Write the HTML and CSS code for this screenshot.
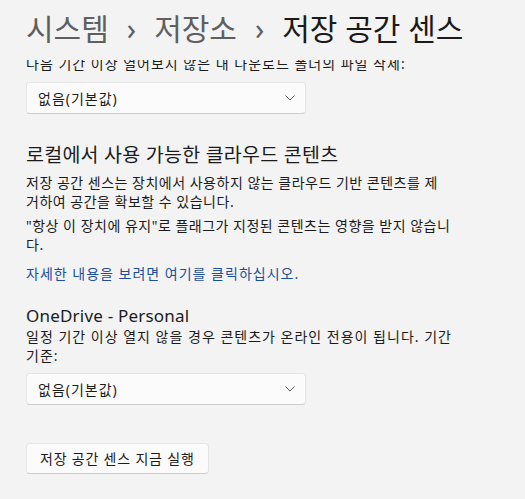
FILE: index.html
```html
<!DOCTYPE html>
<html lang="ko">
<head>
<meta charset="UTF-8">
<meta name="viewport" content="width=device-width, initial-scale=1.0">
<title>저장 공간 센스</title>
<link rel="stylesheet" href="styles.css">
</head>
<body>

<div class="window">
  <header class="page-header">
    <h1 class="breadcrumb">
      <span>시스템</span><span class="sep">›</span><span>저장소</span><span class="sep">›</span><span class="current">저장 공간 센스</span>
    </h1>
  </header>

  <main class="scroll">
    <div class="content">
      <section class="downloads">
        <p class="label">다음 기간 이상 열어보지 않은 내 다운로드 폴더의 파일 삭제:</p>
        <button class="combo" type="button">
          <span>없음(기본값)</span>
          <svg class="chevron" width="10" height="6" viewBox="0 0 10 6"><polyline points="0.5,0.5 5,5 9.5,0.5" fill="none" stroke="#616161" stroke-width="1"/></svg>
        </button>
      </section>

      <section class="cloud">
        <h2 class="section-title">로컬에서 사용 가능한 클라우드 콘텐츠</h2>
        <p class="desc">저장 공간 센스는 장치에서 사용하지 않는 클라우드 기반 콘텐츠를 제<br>거하여 공간을 확보할 수 있습니다.</p>
        <p class="desc">"항상 이 장치에 유지"로 플래그가 지정된 콘텐츠는 영향을 받지 않습니<br>다.</p>
        <p class="desc more"><a href="#">자세한 내용을 보려면 여기를 클릭하십시오.</a></p>
      </section>

      <section class="onedrive">
        <h3 class="account">OneDrive - Personal</h3>
        <p class="label">일정 기간 이상 열지 않을 경우 콘텐츠가 온라인 전용이 됩니다. 기간<br>기준:</p>
        <button class="combo" type="button">
          <span>없음(기본값)</span>
          <svg class="chevron" width="10" height="6" viewBox="0 0 10 6"><polyline points="0.5,0.5 5,5 9.5,0.5" fill="none" stroke="#616161" stroke-width="1"/></svg>
        </button>
      </section>

      <button class="run" type="button">저장 공간 센스 지금 실행</button>
    </div>
  </main>
</div>

</body>
</html>
```

FILE: styles.css
```css
* {
  box-sizing: border-box;
}
body {
  margin: 0;
  background: #f3f3f3;
  color: #1b1b1b;
  font-family: "Noto Sans", "Noto Sans CJK KR", sans-serif;
  font-size: 14px;
  line-height: 19px;
  letter-spacing: 0.5px;
}
.window {
  height: 499px;
  display: flex;
  flex-direction: column;
}
.page-header {
  flex: none;
  height: 60px;
  padding: 11px 26px 0;
}
.breadcrumb {
  margin: 0;
  font-size: 30px;
  line-height: 36px;
  font-weight: 400;
  letter-spacing: 0;
  color: #5f5f5f;
  white-space: nowrap;
}
.breadcrumb .sep {
  margin: 0 18px;
}
.breadcrumb .current {
  color: #1a1a1a;
}
.scroll {
  flex: 1;
  overflow: hidden;
  padding: 0 26px;
}
.content {
  margin-top: -6px;
}
p {
  margin: 0;
}
.label {
  letter-spacing: 1px;
}
.combo {
  display: flex;
  align-items: center;
  justify-content: space-between;
  width: 280px;
  height: 32px;
  margin-top: 9px;
  padding: 0 10px 0 11px;
  background: #fbfbfb;
  border: 1px solid #e5e5e5;
  border-bottom-color: #cccccc;
  border-radius: 4px;
  font: inherit;
  letter-spacing: 1px;
  color: inherit;
  text-align: left;
}
.chevron {
  display: block;
}
.section-title {
  margin: 28px 0 0;
  font-size: 19.5px;
  line-height: 26px;
  font-weight: 400;
  letter-spacing: 0.25px;
}
.cloud .desc {
  margin-top: 5px;
}
.cloud .more {
  margin-top: 10px;
}
.more a {
  color: #1a4f9c;
  text-decoration: none;
  letter-spacing: 1px;
}
.account {
  margin: 22px 0 0;
  font-size: 17px;
  line-height: 22px;
  font-weight: 400;
  letter-spacing: 0.2px;
}
.onedrive .combo {
  margin-top: 8px;
}
.run {
  display: block;
  height: 31px;
  margin-top: 38px;
  padding: 0 13px;
  background: #fbfbfb;
  border: 1px solid #e5e5e5;
  border-bottom-color: #cccccc;
  border-radius: 4px;
  font: inherit;
  letter-spacing: 0.8px;
  color: inherit;
}
```
